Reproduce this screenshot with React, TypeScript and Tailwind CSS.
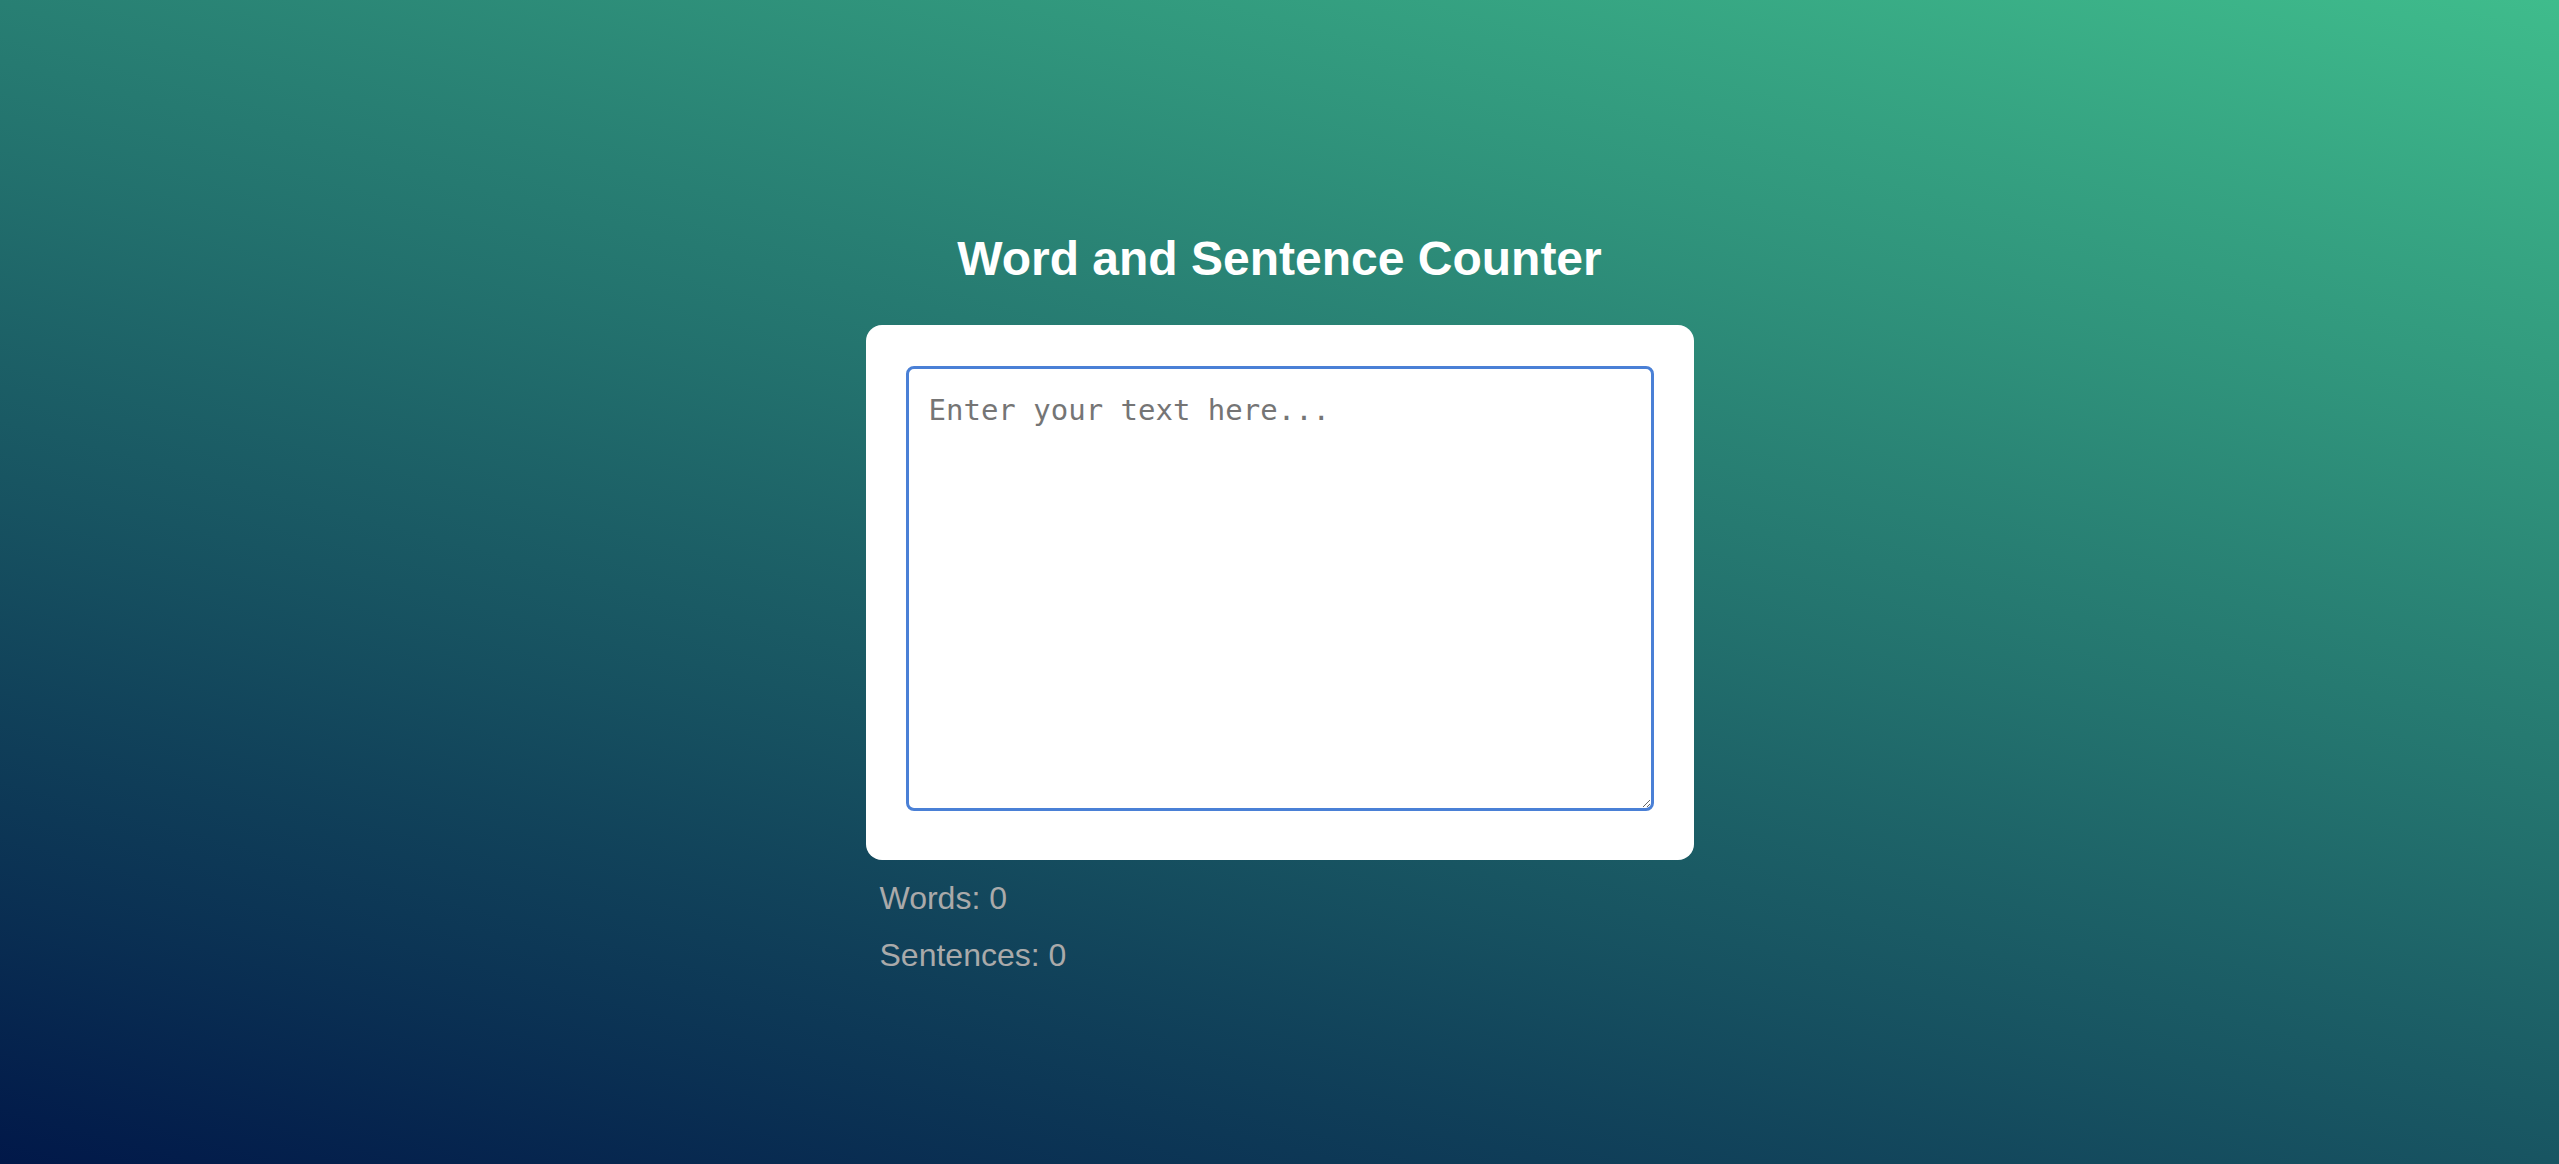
import { useState } from "react";

const countWords = (text: string) => {
  const trimmed = text.trim();
  return trimmed ? trimmed.split(/\s+/).length : 0;
};

const countSentences = (text: string) => {
  return text.split(/[.!?]+/).filter((s) => s.trim().length > 0).length;
};

const App = () => {
  const [text, setText] = useState("");

  return (
    <div className="min-h-[1164px] w-full bg-[linear-gradient(15deg,#011849,#3fbc8c)] font-['Liberation_Sans',Arial,sans-serif]">
      <div className="mx-auto flex w-[828px] flex-col pt-[231px]">
        <h1 className="mb-[39px] text-center text-[48px] font-bold leading-[55px] text-white">
          Word and Sentence Counter
        </h1>

        <div className="rounded-[16px] bg-white px-10 pt-[41px] pb-[49px]">
          <textarea
            value={text}
            onChange={(e) => setText(e.target.value)}
            placeholder="Enter your text here..."
            className="block h-[445px] w-full rounded-[8px] border-[3px] border-[#4a80d6] p-[20px] font-['DejaVu_Sans_Mono',monospace] text-[29px] text-[#333] outline-none placeholder:text-[#757575]"
          />
        </div>

        {/* Stats */}
        <div className="flex flex-col gap-[20px] pt-[20px] pl-[14px] text-[32px] leading-[37px] text-[#aaaaaa]">
          <p>Words: {countWords(text)}</p>
          <p>Sentences: {countSentences(text)}</p>
        </div>
      </div>
    </div>
  );
};

export default App;
